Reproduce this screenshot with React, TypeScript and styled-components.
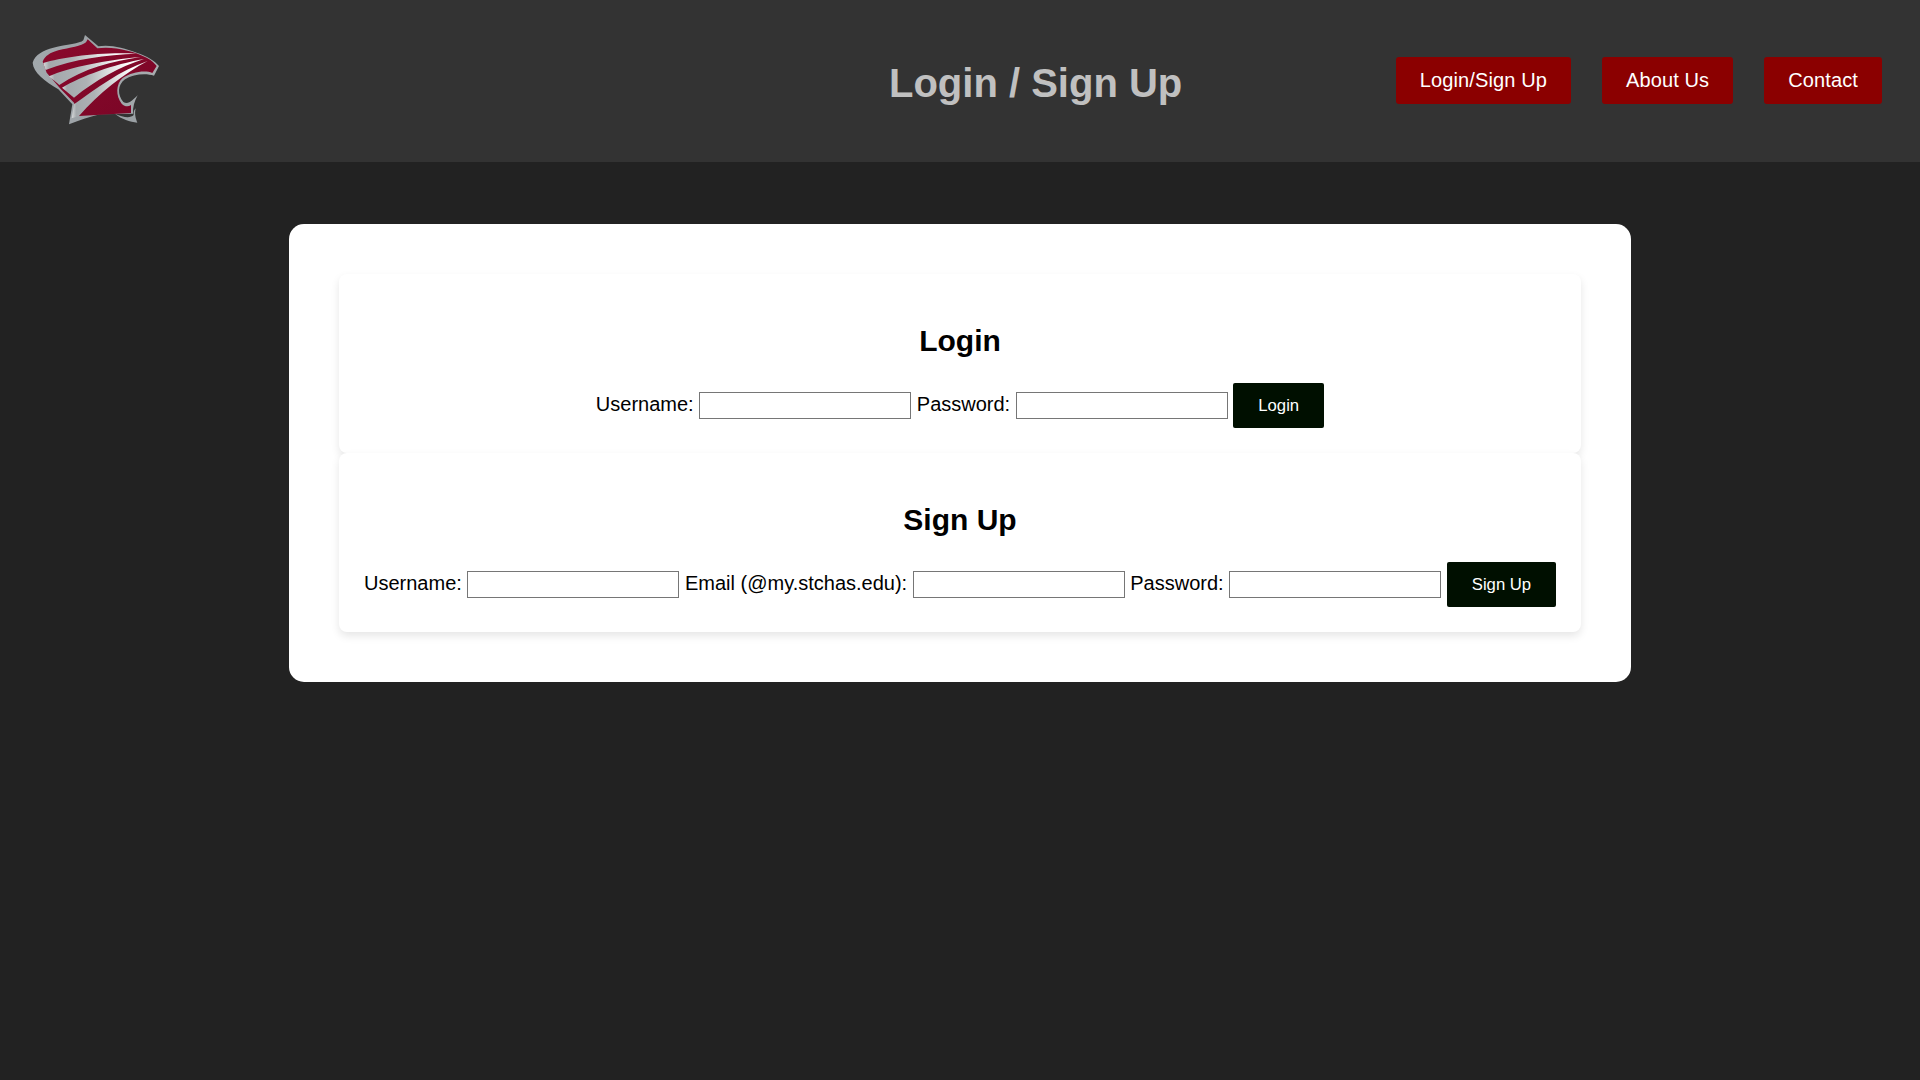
import React from "react";
import styled, { createGlobalStyle } from "styled-components";

const Global = createGlobalStyle`
  html, body { margin: 0; padding: 0; min-height: 100%; background: #222222; }
  body { font-family: "Liberation Sans", Arial, sans-serif; }
`;

const Header = styled.header`
  display: flex;
  align-items: center;
  height: 162px;
  padding: 0 38px 0 30px;
  background: #333333;
`;

const LogoMark = styled.svg`
  display: block;
  flex: none;
  margin-top: -3px;
  width: 132px;
  height: 98px;
`;

const Title = styled.h1`
  margin: 4px 0 0 727px;
  font-size: 40px;
  font-weight: 700;
  color: #c0c0c0;
  white-space: nowrap;
`;

const Nav = styled.nav`
  display: flex;
  gap: 31px;
  margin-left: auto;
  margin-top: -1px;
`;

const NavLink = styled.a`
  display: block;
  padding: 12px 24px;
  border-radius: 3px;
  background: #8b0000;
  color: #ffffff;
  font-size: 20px;
  line-height: 23px;
  letter-spacing: 0.12px;
  white-space: nowrap;
`;

const Card = styled.main`
  width: 1342px;
  box-sizing: border-box;
  margin: 62px auto 0;
  padding: 50px;
  border-radius: 15px;
  background: #ffffff;
`;

const Section = styled.section`
  position: relative;
  padding: 25px;
  border-radius: 8px;
  background: #ffffff;
  box-shadow: 0 4px 8px rgba(0, 0, 0, 0.1);
  text-align: center;
`;

const Heading = styled.h2`
  margin: 25px 0;
  font-size: 30px;
  line-height: 34px;
  font-weight: 700;
  color: #000000;
`;

const Form = styled.form`
  display: block;
  height: 45px;
  font-size: 20px;
  line-height: 23px;
  color: #000000;
  white-space: nowrap;
`;

const Field = styled.input`
  box-sizing: border-box;
  width: 212px;
  height: 27px;
  padding: 1px 2px;
  border: 1px solid #767676;
  background: #ffffff;
  font-family: "Liberation Sans", Arial, sans-serif;
  font-size: 16px;
`;

const Submit = styled.button`
  height: 45px;
  padding: 0 25px;
  border: 0;
  border-radius: 2px;
  background: #000f00;
  color: #ffffff;
  font-family: "Liberation Sans", Arial, sans-serif;
  font-size: 16.7px;
`;

const Logo = () => (
  <LogoMark viewBox="90 90 396 294" aria-label="Cougar logo">
    <defs>
      <linearGradient id="logoOuter" x1="0" y1="0" x2="1" y2="0">
        <stop offset="0" stopColor="#a2a8ac" />
        <stop offset="0.5" stopColor="#9ba1a5" />
        <stop offset="1" stopColor="#a8adb0" />
      </linearGradient>
      <linearGradient id="logoStripe" x1="0" y1="0" x2="1" y2="0">
        <stop offset="0" stopColor="#d8dadb" />
        <stop offset="0.06" stopColor="#a4a9ac" />
        <stop offset="0.3" stopColor="#aeb2b5" />
        <stop offset="0.6" stopColor="#e2e3e4" />
        <stop offset="0.8" stopColor="#ffffff" />
        <stop offset="1" stopColor="#e4e4e4" />
      </linearGradient>
      <linearGradient id="logoRed" x1="0" y1="0" x2="1" y2="1">
        <stop offset="0" stopColor="#8a0a2c" />
        <stop offset="1" stopColor="#7a0526" />
      </linearGradient>
    </defs>
    <path
      fill="url(#logoOuter)"
      d="M98,185 C105,160 130,148 160,140 C200,130 240,128 250,118 L255,102 L295,136 C330,130 370,140 410,155 C440,165 465,180 477,195 L462,224 C440,216 400,218 375,235 C352,252 352,282 370,303 C385,312 398,298 413,283 C403,300 398,320 399,338 L300,340 C270,347 240,358 207,370 L217,310 L175,265 C135,240 100,215 98,185 Z"
    />
    <path
      fill="#9ba1a5"
      d="M345,338 C370,350 392,352 401,342 C400,332 403,326 407,322 C403,340 407,352 412,365 C390,362 365,355 345,338 Z"
    />
    <path
      fill="url(#logoRed)"
      d="M128,182 C135,165 150,155 175,148 C210,140 245,135 258,124 L263,115 L292,142 C340,135 400,150 440,170 C455,178 465,188 470,195 L457,216 C435,207 395,213 368,231 C347,250 347,285 365,308 C375,318 385,318 393,312 L393,336 L237,345 L222,305 L180,262 L140,215 Z"
    />
    <path
      fill="url(#logoStripe)"
      d="M130,186 C190,168 300,152 410,158 C320,161 220,174 137,207 C134,200 132,194 130,186 Z"
    />
    <path
      fill="url(#logoStripe)"
      d="M147,226 C205,200 320,176 422,168 C340,180 250,202 178,252 C168,243 156,235 147,226 Z"
    />
    <path
      fill="url(#logoStripe)"
      d="M186,260 C245,225 340,190 432,174 C360,197 285,238 222,290 C210,280 198,270 186,260 Z"
    />
    <path
      fill="url(#logoStripe)"
      d="M222,310 C290,262 360,208 443,180 C372,218 295,278 237,345 L215,352 Z"
    />
  </LogoMark>
);

export default function App() {
  return (
    <>
      <Global />
      <Header>
        <Logo />
        <Title>Login / Sign Up</Title>
        <Nav>
          <NavLink>Login/Sign Up</NavLink>
          <NavLink>About Us</NavLink>
          <NavLink>Contact</NavLink>
        </Nav>
      </Header>
      <Card>
        <Section>
          <Heading>Login</Heading>
          <Form>
            <label>Username:</label> <Field type="text" /> <label>Password:</label>{" "}
            <Field type="password" /> <Submit type="button">Login</Submit>
          </Form>
        </Section>
        <Section>
          <Heading>Sign Up</Heading>
          <Form>
            <label>Username:</label> <Field type="text" />{" "}
            <label>Email (@my.stchas.edu):</label> <Field type="email" />{" "}
            <label>Password:</label> <Field type="password" />{" "}
            <Submit type="button">Sign Up</Submit>
          </Form>
        </Section>
      </Card>
    </>
  );
}
